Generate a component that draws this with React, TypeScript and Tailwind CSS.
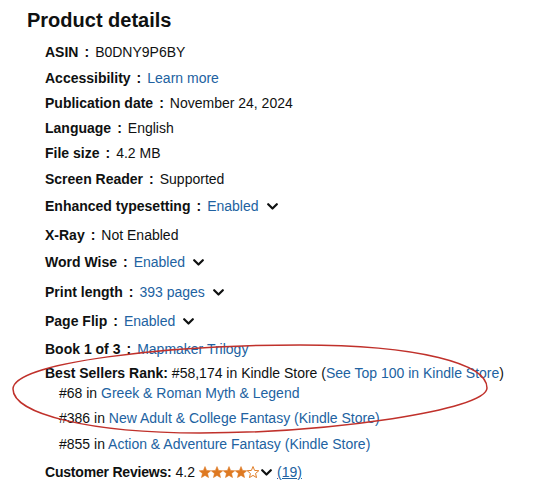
import React from "react";

const link = "text-[#2162a1]";

function Chevron({ className = "ml-2" }: { className?: string }) {
  return (
    <svg
      className={`inline-block ${className}`}
      width="11"
      height="7"
      viewBox="0 0 11 7"
      fill="none"
      stroke="#0f1111"
      strokeWidth="2.2"
      strokeLinecap="round"
      strokeLinejoin="round"
    >
      <path d="M1.2 1.2 L5.5 5.5 L9.8 1.2" />
    </svg>
  );
}

function Star({ filled }: { filled: boolean }) {
  return (
    <svg width="12" height="12" viewBox="1 1 22 21" className="inline-block">
      <path
        d="M12 1.5 L14.9 8.6 L22.6 9.2 L16.7 14.2 L18.5 21.8 L12 17.7 L5.5 21.8 L7.3 14.2 L1.4 9.2 L9.1 8.6 Z"
        fill={filled ? "#de7921" : "none"}
        stroke="#de7921"
        strokeWidth={filled ? 1 : 1.8}
        strokeLinejoin="round"
      />
    </svg>
  );
}

type RowProps = {
  label: string;
  className?: string;
  children: React.ReactNode;
};

function Row({ label, className, children }: RowProps) {
  return (
    <li className={`flex h-5 items-center whitespace-nowrap ${className ?? ""}`}>
      <span className="font-bold">
        {label}
        <span className="mx-[6px]">:</span>
      </span>
      {children}
    </li>
  );
}

export default function App() {
  return (
    <div
      className="relative h-[493px] w-[535px] overflow-hidden bg-white text-[14px] leading-5 text-[#0f1111]"
      style={{ fontFamily: '"Liberation Sans", Arial, sans-serif' }}
    >
      <h2 className="pl-[27px] pt-[6px] text-[20px] font-bold leading-7">Product details</h2>

      <ul className="pl-[45px] pt-2">
        <Row label="ASIN">
          <span>B0DNY9P6BY</span>
        </Row>
        <Row label="Accessibility" className="mt-[6px]">
          <span className={link}>Learn more</span>
        </Row>
        <Row label="Publication date" className="mt-[5px]">
          <span>November 24, 2024</span>
        </Row>
        <Row label="Language" className="mt-[5px]">
          <span>English</span>
        </Row>
        <Row label="File size" className="mt-[5px]">
          <span>4.2 MB</span>
        </Row>
        <Row label="Screen Reader" className="mt-[6px]">
          <span>Supported</span>
        </Row>
        <Row label="Enhanced typesetting" className="mt-[7px]">
          <span className={link}>Enabled</span>
          <Chevron />
        </Row>
        <Row label="X-Ray" className="mt-[9px]">
          <span>Not Enabled</span>
        </Row>
        <Row label="Word Wise" className="mt-[7px]">
          <span className={link}>Enabled</span>
          <Chevron />
        </Row>
        <Row label="Print length" className="mt-[10px]">
          <span className={link}>393 pages</span>
          <Chevron />
        </Row>
        <Row label="Page Flip" className="mt-[9px]">
          <span className={link}>Enabled</span>
          <Chevron />
        </Row>
        <Row label="Book 1 of 3" className="mt-[8px]">
          <span className={link}>Mapmaker Trilogy</span>
        </Row>

        <li className="mt-1 whitespace-nowrap">
          <div className="h-5">
            <span className="font-bold">Best Sellers Rank:</span> #58,174 in Kindle Store (
            <span className={link}>See Top 100 in Kindle Store</span>)
          </div>
          <ul className="pl-[14px]">
            <li className="h-5">
              #68 in <span className={link}>Greek &amp; Roman Myth &amp; Legend</span>
            </li>
            <li className="mt-[5px] h-5">
              #386 in <span className={link}>New Adult &amp; College Fantasy (Kindle Store)</span>
            </li>
            <li className="mt-[6px] h-5">
              #855 in <span className={link}>Action &amp; Adventure Fantasy (Kindle Store)</span>
            </li>
          </ul>
        </li>

        <li className="mt-2 flex h-5 items-center whitespace-nowrap">
          <span className="font-bold tracking-[-0.2px]">Customer Reviews:</span>
          <span className="ml-1">4.2</span>
          <span className="ml-1 flex items-center">
            <Star filled />
            <Star filled />
            <Star filled />
            <Star filled />
            <Star filled={false} />
          </span>
          <Chevron className="ml-[2px]" />
          <span className={`ml-[5px] underline ${link}`}>(19)</span>
        </li>
      </ul>

      {/* hand-drawn highlight over the rank block */}
      <svg className="pointer-events-none absolute inset-0" width="535" height="493">
        <path
          d="M 13 389 C 13 362, 170 345, 300 345 C 420 345, 487 364, 487 388 C 487 410, 330 433, 200 433 C 90 433, 13 414, 13 389 Z"
          fill="none"
          stroke="#c0312b"
          strokeWidth="1.5"
        />
      </svg>
    </div>
  );
}
